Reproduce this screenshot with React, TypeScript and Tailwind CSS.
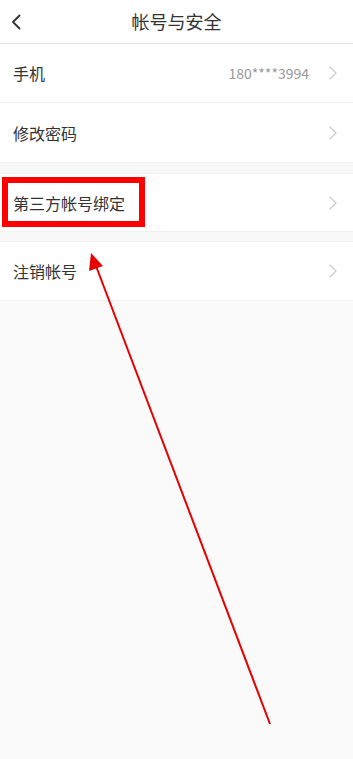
import React from "react";

const Chevron = () => (
  <svg width="8" height="14" viewBox="0 0 8 14" fill="none">
    <path d="M1 1l6 6-6 6" stroke="#cccccc" strokeWidth="1.3" strokeLinecap="round" strokeLinejoin="round" />
  </svg>
);

const Row = ({ label, value, h }: { label: string; value?: string; h: string }) => (
  <div className={`flex items-center justify-between bg-white pl-[13px] pr-[16px] ${h}`}>
    <span className="text-[16px] text-[#333333]">{label}</span>
    <div className="flex items-center gap-[20px]">
      {value && <span className="text-[14px] text-[#999999]">{value}</span>}
      <Chevron />
    </div>
  </div>
);

export default function App() {
  return (
    <div
      className="relative min-h-[759px] w-[353px] bg-[#fafafa]"
      style={{ fontFamily: '"Noto Sans CJK SC", "Noto Sans", sans-serif' }}
    >
      <div className="relative flex h-[44px] items-center justify-center border-b border-[#e2e2e2] bg-white">
        <svg className="absolute left-[11px] top-[14px]" width="10" height="16" viewBox="0 0 10 16" fill="none">
          <path d="M8.5 1.5L2 8l6.5 6.5" stroke="#333333" strokeWidth="1.8" strokeLinecap="round" strokeLinejoin="round" />
        </svg>
        <span className="text-[18px] text-[#333333]">帐号与安全</span>
      </div>
      <div className="border-b border-[#ececec]">
        <Row label="手机" value="180****3994" h="h-[58px]" />
      </div>
      <Row label="修改密码" h="h-[59px]" />
      <div className="h-[12px] border-y border-[#f2f2f2] bg-[#f8f8f8]" />
      <Row label="第三方帐号绑定" h="h-[57px]" />
      <div className="h-[11px] border-y border-[#f2f2f2] bg-[#f8f8f8]" />
      <Row label="注销帐号" h="h-[58px]" />
      <div className="h-px bg-[#f2f2f2]" />

      <div className="absolute left-[2px] top-[177px] h-[50px] w-[143px] border-[6px] border-[#ff0000]" />
      <svg className="absolute left-0 top-0" width="353" height="759" viewBox="0 0 353 759">
        <line x1="270" y1="724" x2="96" y2="266" stroke="#e60000" strokeWidth="2" />
        <polygon points="91,253 103,266 89,271" fill="#e60000" />
      </svg>
    </div>
  );
}
